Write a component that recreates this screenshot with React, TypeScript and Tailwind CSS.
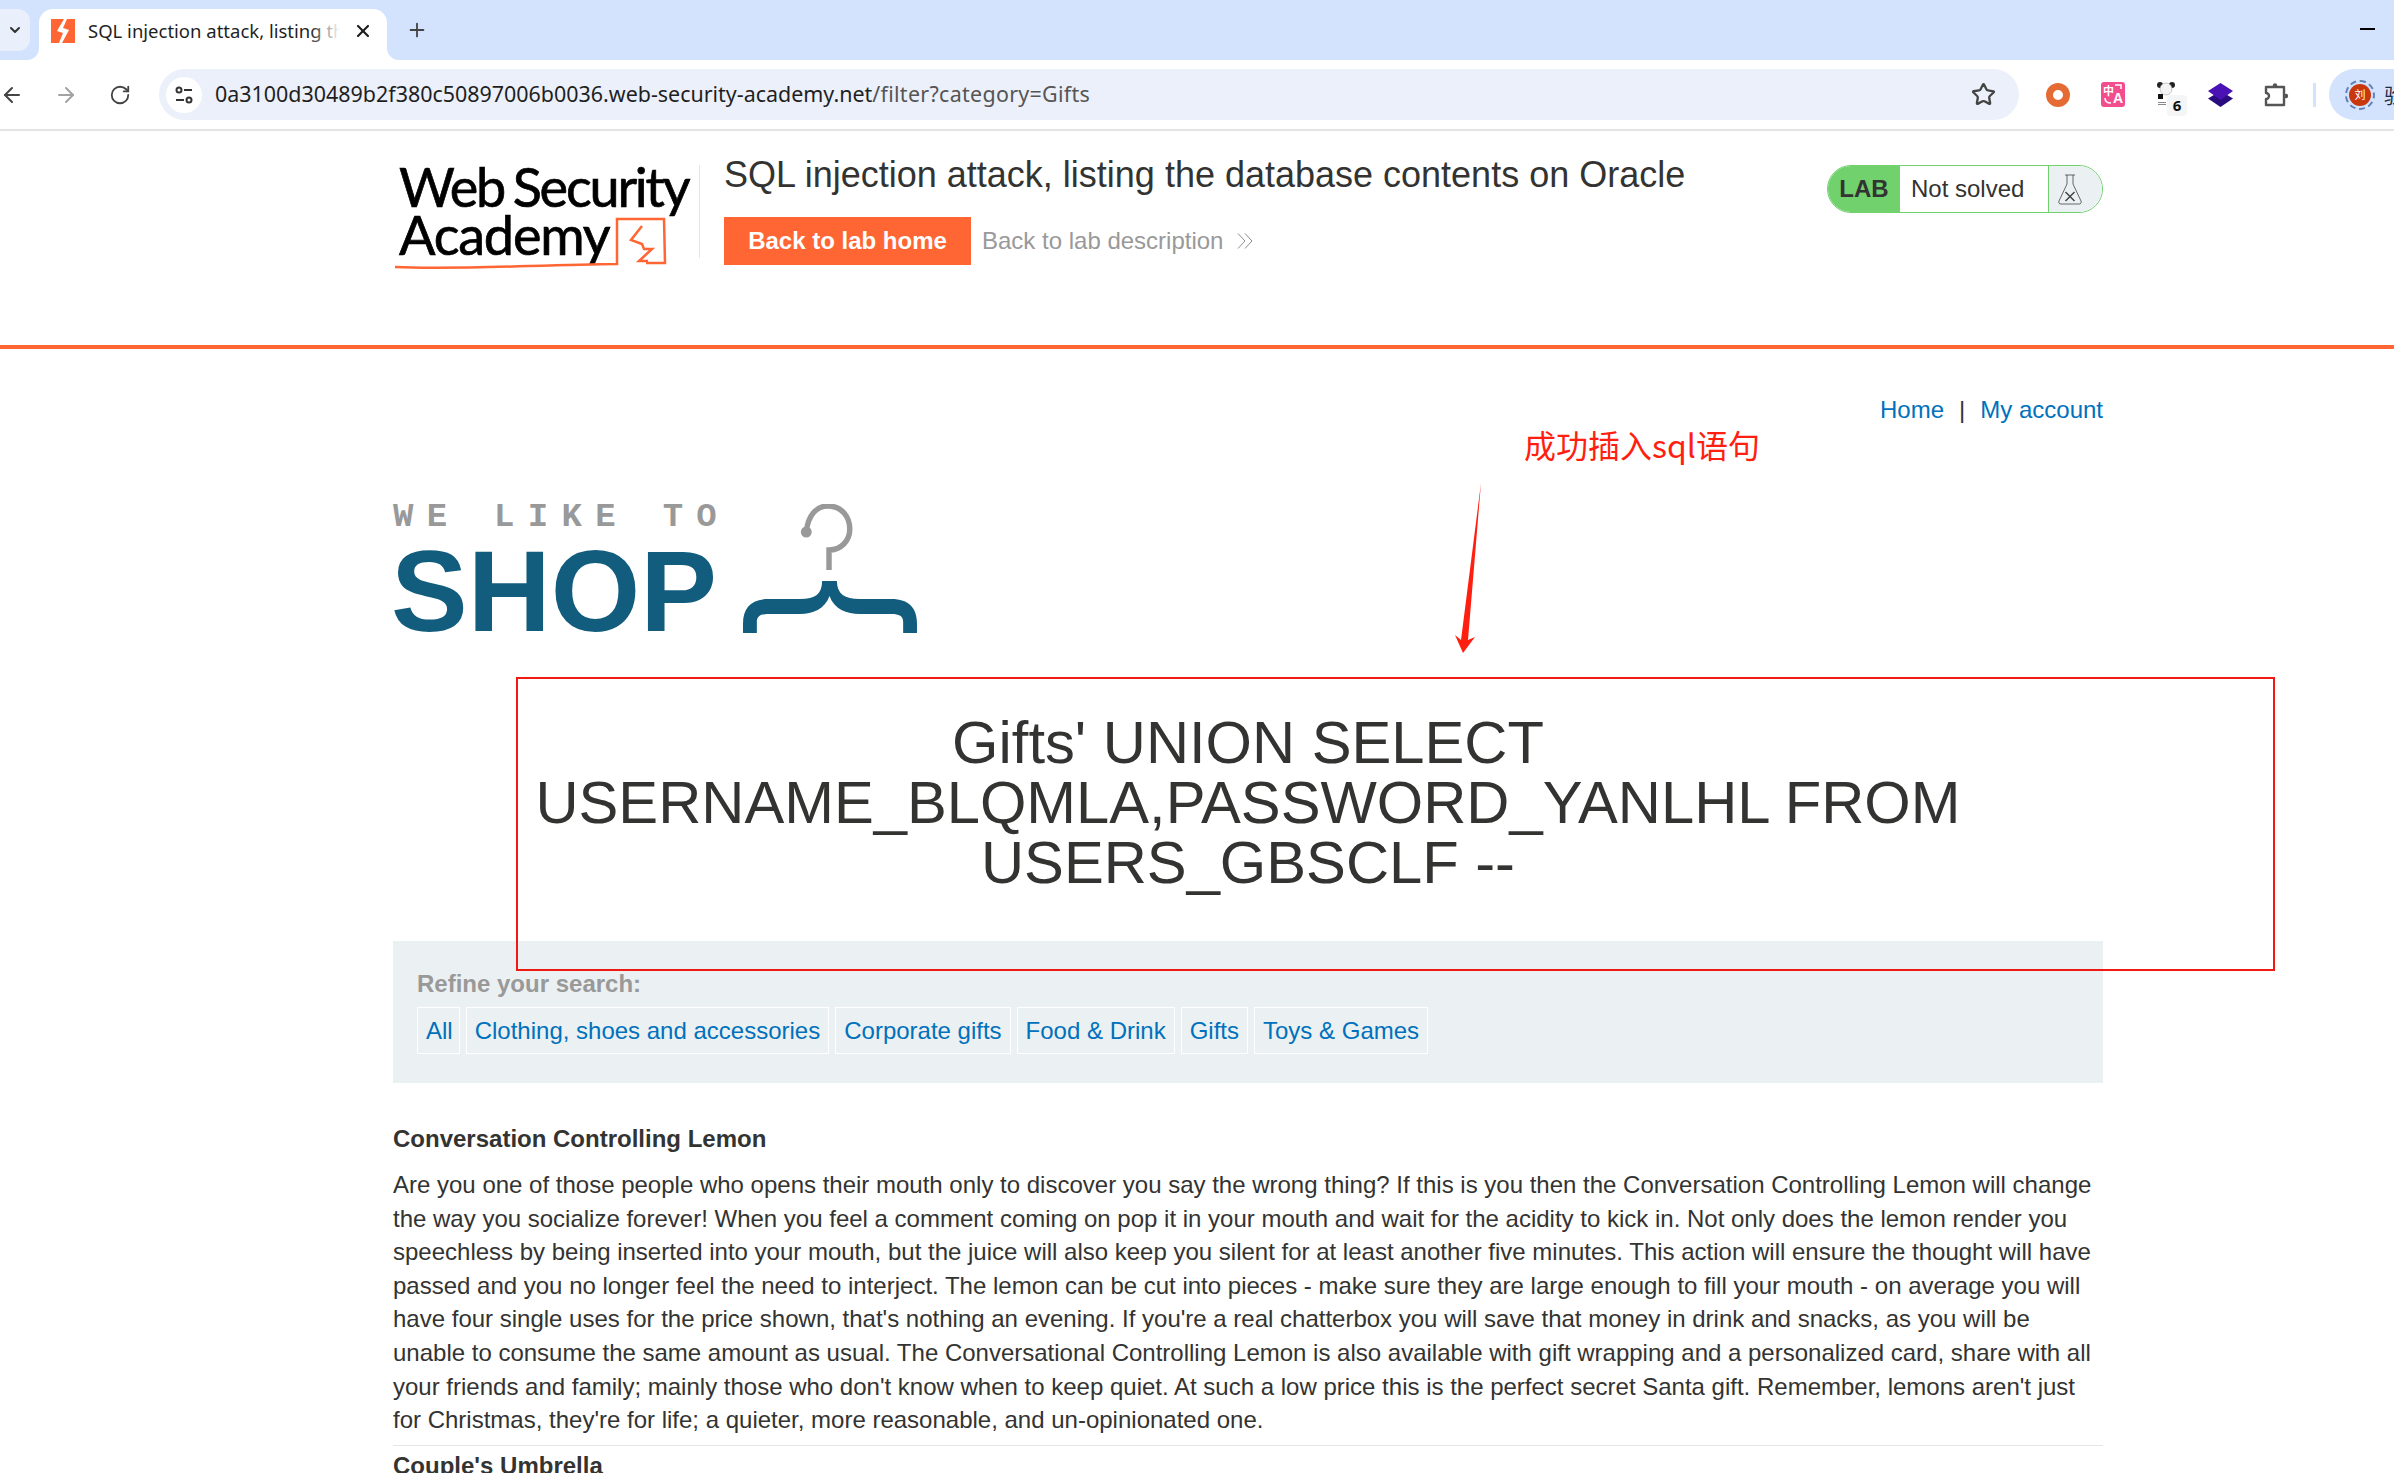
import { ArrowLeft, ArrowRight, ChevronDown, Plus, RotateCw, Star, X } from "lucide-react";

const categories = ["All", "Clothing, shoes and accessories", "Corporate gifts", "Food & Drink", "Gifts", "Toys & Games"];

function Favicon() {
  return (
    <svg width="24" height="24" viewBox="0 0 24 24">
      <rect width="24" height="24" fill="#ff6633" />
      <path d="M13 0 L6 12 L12 14 L8 24 L11 24 L18 11 L12 9 L16 0 Z" fill="#fff" />
    </svg>
  );
}

function SiteSettingsIcon() {
  return (
    <svg width="20" height="20" viewBox="0 0 20 20" fill="none" stroke="#333" strokeWidth="2">
      <circle cx="5" cy="5" r="2.5" />
      <path d="M10 5h8M2 15h8" />
      <circle cx="15" cy="15" r="2.5" />
    </svg>
  );
}

function TranslateIcon() {
  return (
    <div className="relative h-[25px] w-[24px] rounded-[3px] bg-[#f24e8e] font-['Noto_Sans_CJK_SC',sans-serif] font-bold text-white">
      <span className="absolute top-[2px] left-[2px] text-[11px] leading-[12px]">中</span>
      <span className="absolute top-[9px] right-[2px] font-['Liberation_Sans',sans-serif] text-[14px] leading-[14px]">A</span>
      <svg className="absolute top-0 left-0" width="24" height="25" viewBox="0 0 24 25" fill="none" stroke="#fff" strokeWidth="1.5">
        <path d="M14 3h6v4M4 16c0 3 1 5 6 5" />
      </svg>
    </div>
  );
}

function PandaIcon() {
  return (
    <div className="relative h-[25px] w-[20px]">
      <svg width="20" height="24" viewBox="0 0 20 24">
        <circle cx="3" cy="3" r="3" fill="#222" />
        <circle cx="15" cy="3" r="3" fill="#222" />
        <circle cx="9" cy="7" r="6" fill="#f4f4f4" stroke="#999" strokeWidth="0.5" />
        <path d="M1 12h5v5H1z" fill="#111" />
        <path d="M1 20h8v1H1zM1 22h8v1H1z" fill="#888" />
      </svg>
      <div className="absolute top-[13px] left-[10px] flex h-[21px] w-[20px] items-center justify-center rounded-[4px] bg-[#f4f5f6] text-[15px] font-bold text-[#111]">
        6
      </div>
    </div>
  );
}

function LayersIcon() {
  return (
    <svg width="25" height="24" viewBox="0 0 25 24">
      <path d="M12.5 8 L25 15.5 L12.5 24 L0 15.5 Z" fill="#2a0c7e" />
      <path d="M12.5 0 L25 8 L12.5 17 L0 8 Z" fill="#4a12b4" />
    </svg>
  );
}

function PuzzleIcon() {
  return (
    <svg width="25" height="24" viewBox="0 0 25 24" fill="none" stroke="#555" strokeWidth="2.4" strokeLinejoin="round">
      <path d="M2 4h18v18H2v-6a3 3 0 0 0 0-6V4z" />
      <circle cx="11" cy="2.5" r="2.2" fill="#555" stroke="none" />
      <circle cx="22" cy="13" r="2.2" fill="#555" stroke="none" />
    </svg>
  );
}

function ChevronPair() {
  return (
    <svg width="16" height="16" viewBox="0 0 16 16" fill="none" stroke="#8c8c8c" strokeWidth="1">
      <path d="M1 0.5 L8 8 L1 15.5 M8 0.5 L15 8 L8 15.5" />
    </svg>
  );
}

function Flask() {
  return (
    <svg width="24" height="31" viewBox="0 0 24 31" fill="none" stroke="#444" strokeWidth="0.8">
      <path d="M7 1h10M9 1v9L1 27a2 2 0 0 0 2 3h18a2 2 0 0 0 2-3L15 10V1" />
      <path d="M7.5 18 L16.5 27 M16.5 18 L7.5 27" strokeWidth="1.5" />
    </svg>
  );
}

function AcademyLogo() {
  return (
    <div className="relative h-[118px] w-[306px] pt-[9px] pl-[6px] font-['Lato',sans-serif] text-[54px] leading-[46px] tracking-[-2.2px] text-black [-webkit-text-stroke:0.7px_#000] [word-spacing:-3px]">
      <div>Web Security</div>
      <div className="mt-[2px] tracking-[-1.2px]">Academy</div>
      <svg className="absolute top-0 left-0" width="306" height="118" viewBox="0 0 306 118" fill="none">
        <path d="M2 112 C60 115 140 110 224 109 V64 H271 L272 108 H253" stroke="#ff6633" strokeWidth="2.5" />
        <path d="M249 71 L238 85 L249 89 L251 94 L259 94 L246 106 L255 106" stroke="#ff6633" strokeWidth="2.5" />
      </svg>
    </div>
  );
}

function Hanger() {
  return (
    <svg width="174" height="130" viewBox="0 0 176 130" fill="none" preserveAspectRatio="none">
      <path d="M64 28 C66 10 75 2 86 2 C100 2 108 13 108 25 C108 37 99 46 87 46 V66" stroke="#999" strokeWidth="5.5" />
      <circle cx="64" cy="28" r="5.5" fill="#999" />
      <path
        d="M80 77 H95 C95 90 103 95 118 95 H150 C168 95 176 104 176 120 V129 H162 V118 C162 112 158 110 150 110 H118 C105 110 92 105 87.5 92 C83 105 70 110 58 110 H26 C18 110 14 112 14 118 V129 H0 V120 C0 104 8 95 26 95 H58 C73 95 80 90 80 77 Z"
        fill="#125d7e"
      />
    </svg>
  );
}

function BrowserChrome() {
  return (
    <div className="font-['Noto_Sans',sans-serif] text-[#1f1f1f]">
      <div className="relative flex h-[60px] items-end bg-[#d3e3fd]">
        <div className="mb-[9px] flex h-[42px] w-[30px] items-center justify-center rounded-r-[12px] bg-[#e9effb]">
          <ChevronDown size={16} strokeWidth={3} className="text-[#333]" />
        </div>
        <div className="relative ml-[9px] flex h-[51px] w-[348px] items-center rounded-t-[14px] bg-white pb-[7px] pl-[12px]">
          <div className="absolute bottom-0 left-[-12px] h-[12px] w-[12px] bg-white">
            <div className="h-full w-full rounded-br-[12px] bg-[#d3e3fd]" />
          </div>
          <div className="absolute right-[-12px] bottom-0 h-[12px] w-[12px] bg-white">
            <div className="h-full w-full rounded-bl-[12px] bg-[#d3e3fd]" />
          </div>
          <Favicon />
          <div className="relative ml-[13px] w-[252px] overflow-hidden text-[18.5px] whitespace-nowrap">
            SQL injection attack, listing the database
            <div className="absolute inset-y-0 right-0 w-[30px] bg-gradient-to-r from-transparent to-white" />
          </div>
          <X size={20} strokeWidth={2.6} className="ml-[13px]" />
        </div>
        <Plus size={22} className="mb-[19px] ml-[19px] text-[#444]" />
        <div className="absolute top-[28px] right-[19px] h-[2px] w-[15px] bg-black" />
      </div>
      <div className="flex h-[71px] items-center border-b-2 border-[#e3e3e3] bg-white">
        <ArrowLeft size={24} className="shrink-0 text-[#444]" />
        <ArrowRight size={24} className="ml-[30px] shrink-0 text-[#a3a3a3]" />
        <RotateCw size={22} className="ml-[31px] shrink-0 text-[#444]" />
        <div className="ml-[28px] flex h-[51px] w-[1860px] shrink-0 items-center rounded-full bg-[#ebf0fa] pl-[7px]">
          <div className="flex h-[36px] w-[36px] items-center justify-center rounded-full bg-white">
            <SiteSettingsIcon />
          </div>
          <div className="ml-[13px] text-[21.45px] whitespace-nowrap">
            0a3100d30489b2f380c50897006b0036.web-security-academy.net
            <span className="tracking-[0.3px] text-[#555]">/filter?category=Gifts</span>
          </div>
          <Star size={25} strokeWidth={2.2} className="mr-[23px] ml-auto text-[#444]" />
        </div>
        <div className="ml-[27px] h-[24px] w-[24px] shrink-0 rounded-full border-[7px] border-[#e56b35]" />
        <div className="ml-[31px] shrink-0">
          <TranslateIcon />
        </div>
        <div className="ml-[32px] shrink-0">
          <PandaIcon />
        </div>
        <div className="ml-[31px] shrink-0">
          <LayersIcon />
        </div>
        <div className="ml-[31px] shrink-0">
          <PuzzleIcon />
        </div>
        <div className="ml-[24px] h-[24px] w-[3px] shrink-0 bg-[#d3e3fd]" />
        <div className="ml-[13px] flex h-[51px] flex-1 items-center overflow-hidden rounded-l-full bg-[#d3e3fd] pl-[16px]">
          <div className="flex h-[30px] w-[30px] shrink-0 items-center justify-center rounded-full border-2 border-dashed border-[#5f82b8]">
            <div className="flex h-[22px] w-[22px] shrink-0 items-center justify-center rounded-full bg-[#c9380d] font-['Noto_Sans_CJK_SC',sans-serif] text-[11px] text-white">
              刘
            </div>
          </div>
          <span className="ml-[9px] font-['Noto_Sans_CJK_SC',sans-serif] text-[21px] whitespace-nowrap text-[#1f2a44]">验</span>
        </div>
      </div>
    </div>
  );
}

function LabHeader() {
  return (
    <div className="flex h-[218px] items-start border-b-4 border-[#ff6633] pt-[24px] pr-[291px] pl-[393px]">
      <AcademyLogo />
      <div className="mt-[10px] h-[93px] w-px bg-[#e6e6e6]" />
      <div className="ml-[24px]">
        <div className="text-[36px] leading-[39px] text-[#333332]">SQL injection attack, listing the database contents on Oracle</div>
        <div className="mt-[23px] flex items-center">
          <div className="flex h-[48px] w-[247px] items-center justify-center bg-[#ff6633] text-[24px] font-bold text-white">Back to lab home</div>
          <div className="ml-[11px] text-[24px] text-[#999]">Back to lab description</div>
          <div className="ml-[14px]">
            <ChevronPair />
          </div>
        </div>
      </div>
      <div className="mt-[10px] ml-auto flex h-[48px] w-[276px] overflow-hidden rounded-[24px] border border-[#70d16d] text-[24px] text-[#333332]">
        <div className="flex w-[72px] items-center justify-center bg-[#70d16d] font-bold">LAB</div>
        <div className="flex w-[149px] items-center border-r border-[#70d16d] pl-[11px]">Not solved</div>
        <div className="flex flex-1 items-center bg-[#ebf0f2] pl-[9px]">
          <Flask />
        </div>
      </div>
    </div>
  );
}

export default function App() {
  return (
    <div className="relative h-[1473px] w-[2394px] overflow-hidden bg-white font-['Liberation_Sans',sans-serif] text-[#333332]">
      <BrowserChrome />
      <LabHeader />
      <div className="ml-[393px] w-[1710px]">
        <div className="flex justify-end pt-[44px] text-[24px] leading-[34px]">
          <span className="text-[#0071bc]">Home</span>
          <span className="mx-[15px]">|</span>
          <span className="text-[#0071bc]">My account</span>
        </div>
        <div className="mt-[74px] flex h-[138px] items-start">
          <div>
            <div className="font-['Liberation_Mono',monospace] text-[34px] leading-[32px] font-bold tracking-[13.3px] text-[#999]">WE LIKE TO</div>
            <div className="mt-[1px] ml-[-2px] text-[115px] leading-[114px] font-bold text-[#125d7e]">SHOP</div>
          </div>
          <div className="mt-[3px] ml-[13px]">
            <Hanger />
          </div>
        </div>
        <h1 className="mt-[74px] text-center text-[59.7px] leading-[60px]">
          Gifts' UNION SELECT USERNAME_BLQMLA,PASSWORD_YANLHL FROM USERS_GBSCLF --
        </h1>
        <div className="mt-[48px] h-[142px] bg-[#ebf0f2] pt-[26px] pl-[24px]">
          <div className="text-[24px] leading-[34px] font-bold text-[#999]">Refine your search:</div>
          <div className="mt-[6px] flex gap-[6px]">
            {categories.map((c) => (
              <div key={c} className={c === "All" ? "flex h-[47px] items-center border border-white pr-[6px] pl-[8px] text-[24px] text-[#0071bc]" : "flex h-[47px] items-center border border-white px-[8px] text-[24px] text-[#0071bc]"}>
                {c}
              </div>
            ))}
          </div>
        </div>
        <div className="mt-[39px] text-[24px] leading-[34px] font-bold">Conversation Controlling Lemon</div>
        <p className="mt-[12px] text-[24px] leading-[33.6px]">
          Are you one of those people who opens their mouth only to discover you say the wrong thing? If this is you then the Conversation Controlling Lemon will change the way you socialize forever! When you feel a comment coming on pop it in your mouth and wait for the acidity to kick in. Not only does the lemon render you speechless by being inserted into your mouth, but the juice will also keep you silent for at least another five minutes. This action will ensure the thought will have passed and you no longer feel the need to interject. The lemon can be cut into pieces - make sure they are large enough to fill your mouth - on average you will have four single uses for the price shown, that's nothing an evening. If you're a real chatterbox you will save that money in drink and snacks, as you will be unable to consume the same amount as usual. The Conversational Controlling Lemon is also available with gift wrapping and a personalized card, share with all your friends and family; mainly those who don't know when to keep quiet. At such a low price this is the perfect secret Santa gift. Remember, lemons aren't just for Christmas, they're for life; a quieter, more reasonable, and un-opinionated one.
        </p>
        <div className="mt-[8px] h-px bg-[#e6e6e6]" />
        <div className="mt-[3px] text-[24px] leading-[34px] font-bold">Couple's Umbrella</div>
      </div>

      {/* annotations drawn over the screenshot */}
      <div className="absolute top-[677px] left-[516px] h-[294px] w-[1759px] border-2 border-[#f01a12]" />
      <div className="absolute top-[422px] left-[1524px] font-['Noto_Sans_CJK_SC',sans-serif] text-[32px] leading-[44px] whitespace-nowrap text-[#ff1f10]">
        成功插入sql语句
      </div>
      <svg className="absolute top-[483px] left-[1450px]" width="36" height="172" viewBox="0 0 36 172">
        <path d="M31 0 L18 157 L25 154 L13 170 L5 152 L11 157 Z" fill="#ff1f10" />
      </svg>
    </div>
  );
}
